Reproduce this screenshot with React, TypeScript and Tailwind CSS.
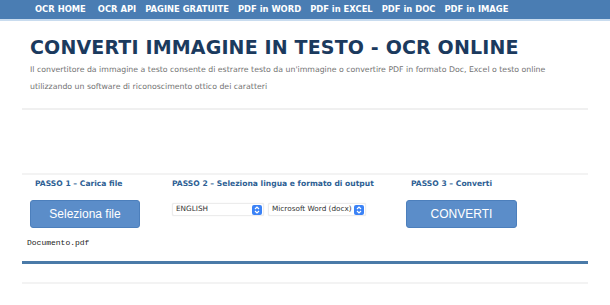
const nav = ["OCR HOME", "OCR API", "PAGINE GRATUITE", "PDF in WORD", "PDF in EXCEL", "PDF in DOC", "PDF in IMAGE"]

function SelectArrows() {
  return (
    <span className="flex h-[10px] w-[10px] items-center justify-center rounded-[2px] bg-[#3b82f6]">
      <svg width="6" height="8" viewBox="0 0 6 8" fill="none" stroke="white" strokeWidth="1.2">
        <path d="M1 3 L3 1 L5 3" />
        <path d="M1 5 L3 7 L5 5" />
      </svg>
    </span>
  )
}

export default function App() {
  return (
    <div className="h-[305px] w-[610px] overflow-hidden bg-white font-['DejaVu_Sans',sans-serif]">
      <header className="flex h-[21px] items-center border-b-2 border-[#c9dcef] bg-[#4a7db3] pl-[35px] text-[8.4px] font-bold text-white">
        <span className="mr-[12px]">{nav[0]}</span>
        {nav.slice(1).map((item) => (
          <span key={item} className="mr-[9px]">{item}</span>
        ))}
      </header>

      <main className="px-[22px]">
        <section className="px-[8px] pt-[14px]">
          <h1 className="text-[19px] font-bold leading-[24px] tracking-[0.15px] text-[#1b3a5e]">
            CONVERTI IMMAGINE IN TESTO - OCR ONLINE
          </h1>
          <p className="mt-[2px] whitespace-nowrap text-[7.8px] leading-[17px] text-[#737373]">
            Il convertitore da immagine a testo consente di estrarre testo da un'immagine o convertire PDF in formato Doc, Excel o testo online
            <br />
            utilizzando un software di riconoscimento ottico dei caratteri
          </p>
        </section>

        <div className="mt-[13px] h-[2px] bg-[#f0f0f0]" />
        <div className="h-[63px]" />
        <div className="h-[2px] bg-[#f3f3f3]" />

        <section className="flex pt-[4px]">
          <div className="w-[150px] pl-[8px]">
            <p className="pl-[5px] text-[7.6px] font-bold leading-[10px] text-[#2e5f94]">PASSO 1 – Carica file</p>
            <button className="mt-[11px] h-[28px] w-[110px] rounded-[3px] border border-[#4c7fbc] bg-[#5b8dc9] font-['Liberation_Sans',sans-serif] text-[12px] text-white">
              Seleziona file
            </button>
            <p className="mt-[9px] ml-[-3px] font-['Liberation_Mono',monospace] text-[8px] leading-[12px] text-[#222]">Documento.pdf</p>
          </div>
          <div className="w-[229px]">
            <p className="text-[7.6px] font-bold leading-[10px] text-[#2e5f94]">PASSO 2 – Seleziona lingua e formato di output</p>
            <div className="mt-[14px] flex gap-[4px]">
              <div className="flex h-[13px] w-[92px] items-center justify-between rounded-[2px] border border-[#ececec] bg-white pl-[3px] pr-[1px] text-[7.3px] text-[#333] shadow-[0_0_1px_rgba(0,0,0,0.15)]">
                <span>ENGLISH</span>
                <SelectArrows />
              </div>
              <div className="flex h-[13px] w-[98px] items-center justify-between rounded-[2px] border border-[#ececec] bg-white pl-[3px] pr-[1px] text-[7.3px] text-[#333] shadow-[0_0_1px_rgba(0,0,0,0.15)]">
                <span>Microsoft Word (docx)</span>
                <SelectArrows />
              </div>
            </div>
          </div>
          <div className="pl-[5px]">
            <p className="pl-[5px] text-[7.6px] font-bold leading-[10px] text-[#2e5f94]">PASSO 3 – Converti</p>
            <button className="mt-[11px] h-[28px] w-[111px] rounded-[3px] border border-[#4c7fbc] bg-[#5b8dc9] font-['Liberation_Sans',sans-serif] text-[12px] text-white">
              CONVERTI
            </button>
          </div>
        </section>

        <div className="mt-[12px] h-[3px] bg-[#4a7aa8]" />
        <div className="h-[18px]" />
        <div className="h-[2px] bg-[#f3f3f3]" />
      </main>
    </div>
  )
}
